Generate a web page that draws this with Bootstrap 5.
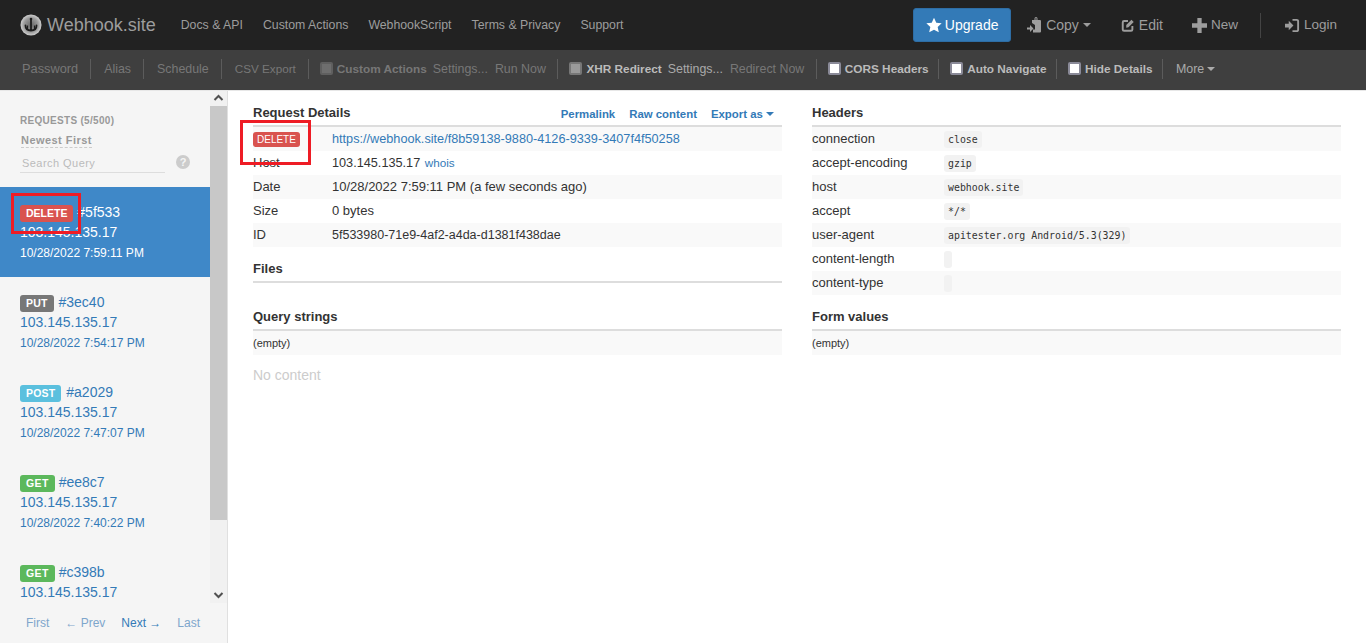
<!DOCTYPE html>
<html lang="en"><head><meta charset="utf-8"><title>Webhook.site</title>
<link href="https://cdn.jsdelivr.net/npm/bootstrap@5.3.0/dist/css/bootstrap.min.css" rel="stylesheet">
<style>
html,body{height:643px;overflow:hidden}
body{font-family:"Liberation Sans",Arial,sans-serif;font-size:14px;color:#333;line-height:20px;background:#fff;position:relative}
a{text-decoration:none;color:#337ab7}
.topbar{height:50px;background:#222;padding-left:20px;padding-right:29px}
.brand{font-size:18px;color:#9d9d9d;margin-right:25px}
.brand svg{margin-right:5px}
.tlink{font-size:12.3px;color:#9d9d9d;margin-right:20px}
.btn-up{background:#337ab7;color:#fff;font-size:14px;height:34px;border-radius:3px;border:1px solid #2e6da4;width:98px;white-space:nowrap}
.btn-up svg{margin-right:3px}
.rlink{font-size:14px;color:#9d9d9d}
.rlink svg{margin-right:4px}
.r-sm{font-size:13.5px}
.m-copy{margin-left:16px}.m-edit{margin-left:30px}.m-new{margin-left:29px}
.vsep{width:1px;height:25px;background:#444;margin:0 24px 0 22px}
.caret-d{display:inline-block;width:0;height:0;border-top:4px solid currentColor;border-left:4px solid transparent;border-right:4px solid transparent;vertical-align:2px}
.caret-copy{margin-left:4px}
.tools{height:40px;background:#3f3f3f;padding-left:22px;padding-bottom:2px;font-size:12.4px;color:#888;position:relative;box-shadow:0 1px 0 #e7e7e7;z-index:1}
.tools .gitem{padding:0 12px 0 13px;height:20px;border-left:1px solid #5c5c5c;line-height:20px;white-space:nowrap}
.tools .gitem:first-child{padding-left:0;border-left:0}
.tools .g-cb{padding:0 9.500px 0 11px}
.tools .g-act{padding:0 11.500px 0 11px}
.t-pass{font-size:12.8px}
.t-csv{font-size:11.7px}
.dim{color:#777}
.lit{color:#bbb;font-weight:700;font-size:11.8px}
.faint{color:#777;font-weight:700;font-size:11.8px}
.gap-s{margin-left:6px}.gap-m{margin-left:7px}
.sett{color:#aaa}
.more{color:#aaa}
.more .caret-d{margin-left:3px}
.cb{width:13px;height:13px;border:2px solid #8a8a98;border-radius:2px;background:#fff;margin-right:4px;display:inline-block;vertical-align:-2px}
.cb.off{background:#9a9a9a;border-color:#777}
.cb.off2{background:#6e6e6e;border-color:#5f5f5f}
.side{width:228px;background:#f5f5f5;border-right:1px solid #e0e0e0;height:553px;flex:none}
.side-scroll{height:513px;overflow:hidden}
.side-main{width:210px}
.sbar{width:17px;background:#f1f1f1;height:513px;position:relative}
.sthumb{height:414px;background:#c8c8c8;margin-top:16px}
.sb-up{top:0;left:0}
.sb-dn{bottom:0;left:0}
.side-head{height:97px;padding:21px 20px 0;color:#999}
.rq{font-size:10px;font-weight:700;letter-spacing:.3px;line-height:19px}
.nf{font-size:11px;font-weight:700;line-height:20px;letter-spacing:.45px;margin-left:1px}
.nf span{border-bottom:1px dashed #ccc;padding-bottom:1px}
.sq{width:146px;border-bottom:1px solid #ddd;font-size:11px;color:#bbb;height:20px;line-height:20px;padding-left:2px;letter-spacing:.45px;margin-top:3px}
.help{width:14px;height:14px;border-radius:50%;background:#ccc;color:#f5f5f5;font-size:11px;font-weight:700;line-height:14px;text-align:center;margin-left:11px}
.ritem{height:90px;padding:15px 20px 0;color:#337ab7;font-size:14px;line-height:20px}
.ritem.act{background:#3f88c8;color:#fff}
.ritem .tm{font-size:12px}
.mbadge{display:inline-block;font-size:10.5px;font-weight:700;color:#fff;line-height:11px;padding:3px 6px;border-radius:3px;letter-spacing:.2px;margin-right:1px}
.b-del{background:#d9534f;letter-spacing:0;margin-right:0}.b-put{background:#777}.b-post{background:#5bc0de}.b-get{background:#5cb85c;letter-spacing:.4px;margin-right:0}
.b-det{font-weight:400;font-size:10px;padding:2px 4px;letter-spacing:0}
.pager{height:40px;font-size:12px;padding:0 27px 0 26px;color:#7ea6cc}
.pager .nx{color:#337ab7}
.mainp{padding:13px 25px 0;flex:1;gap:30px;position:relative}
.mcol{width:529px}
.sech{font-size:13px;font-weight:700;color:#333;line-height:20px;height:22px}
.secbar{height:2px;background:#ddd}
.secrow{height:24px;line-height:24px;font-size:13px}
.secrow:nth-child(odd){background:#f9f9f9}
.klbl{width:79px;flex:none}
.hkey{width:132px;flex:none}
.mlinks{font-size:11.4px;font-weight:700;gap:14px;margin-right:8px;margin-top:1px}
.t-url{font-size:12.7px}.t-ip{font-size:12.7px}.t-id{font-size:12.5px}
.whois{font-size:11.7px;margin-left:1px}
.cd{font-family:"DejaVu Sans Mono","Liberation Mono",monospace;font-size:9.9px;background:#f2f2f2;color:#333;padding:0 4px;border-radius:3px;line-height:17px;height:17px;display:inline-block;min-width:8px}
.emp{font-size:11px;height:24px;line-height:24px;background:#f9f9f9}
.noc{color:#ccc;font-size:14px;margin-top:10px}
.mt-files{margin-top:12px}.mt-query{margin-top:24px}.mt-form{margin-top:12px}
.redbox{position:absolute;border:3px solid #ee1c25}
.rb-a{left:11px;top:193px;width:70px;height:41px}
.rb-b{left:240px;top:120px;width:71px;height:45px}
</style></head><body>
<nav class="topbar d-flex align-items-center">
<a class="brand d-flex align-items-center" href="#"><svg width="22" height="22" viewBox="0 0 22 22"><defs><radialGradient id="g" cx=".5" cy=".5" r=".55"><stop offset="0" stop-color="#666"/><stop offset=".6" stop-color="#999"/><stop offset="1" stop-color="#ddd"/></radialGradient></defs><circle cx="11" cy="11" r="10.500" fill="url(#g)"/><path d="M11 5v11.500M5.500 11.500c0 3.500 2.500 5 5.500 5s5.500-1.500 5.500-5" fill="none" stroke="#1c1c1c" stroke-width="1.800" stroke-linecap="round"/><path d="M7.500 15.500v-4M14.500 15.500v-4" stroke="#1c1c1c" stroke-width="1.200"/><circle cx="11" cy="5" r="1.300" fill="#1c1c1c"/></svg>Webhook.site</a>
<a class="tlink" href="#">Docs &amp; API</a><a class="tlink" href="#">Custom Actions</a><a class="tlink" href="#">WebhookScript</a><a class="tlink" href="#">Terms &amp; Privacy</a><a class="tlink" href="#">Support</a>
<div class="ms-auto d-flex align-items-center">
<a class="btn-up d-flex align-items-center justify-content-center" href="#"><svg width="16" height="16" viewBox="0 0 24 24"><path fill="#fff" d="M12 1l3.400 7.600 8.100.9-6 5.500 1.700 8L12 19l-7.200 4 1.700-8-6-5.500 8.100-.9z"/></svg>Upgrade</a>
<a class="rlink d-flex align-items-center m-copy" href="#"><svg width="15" height="16" viewBox="0 0 15 16"><path fill="#9d9d9d" d="M5 3h2.500V1.500a1.500 1.500 0 0 1 3 0V3H13a1 1 0 0 1 1 1v10.500a1 1 0 0 1-1 1H6v-3h2V8L5 6z"/><path fill="#9d9d9d" d="M0 10.500h3V8l3.500 3.500L3 15v-2.500H0z"/><circle cx="9" cy="2" r=".8" fill="#222"/></svg>Copy<span class="caret-d caret-copy"></span></a>
<a class="rlink d-flex align-items-center m-edit" href="#"><svg width="14" height="14" viewBox="0 0 16 16"><path fill="none" stroke="#9d9d9d" stroke-width="2.200" d="M13 9v4a1.500 1.500 0 0 1-1.500 1.500h-8A1.500 1.500 0 0 1 2 13V5a1.500 1.500 0 0 1 1.500-1.500H8"/><path fill="#9d9d9d" d="M6 8l6-6 2.500 2.500-6 6L6 11z"/></svg>Edit</a>
<a class="rlink r-sm d-flex align-items-center m-new" href="#"><svg width="15" height="15" viewBox="0 0 14 14"><path fill="#9d9d9d" d="M5 0h4v5h5v4H9v5H5V9H0V5h5z"/></svg>New</a>
<span class="vsep"></span>
<a class="rlink r-sm d-flex align-items-center" href="#"><svg width="15" height="15" viewBox="0 0 16 16"><path fill="#9d9d9d" d="M0 6h4V3l5 5-5 5v-3H0z"/><path fill="none" stroke="#9d9d9d" stroke-width="2" d="M8 2h4.500A1.500 1.500 0 0 1 14 3.500v9a1.500 1.500 0 0 1-1.500 1.500H8"/></svg>Login</a>
</div>
</nav>
<div class="tools d-flex align-items-center">
<div class="gitem dim t-pass">Password</div><div class="gitem dim">Alias</div><div class="gitem dim">Schedule</div><div class="gitem dim t-csv">CSV Export</div>
<div class="gitem g-act dim"><span class="cb off2"></span><span class="faint">Custom Actions</span><span class="gap-s">Settings...</span><span class="gap-m">Run Now</span></div>
<div class="gitem g-act dim"><span class="cb off"></span><span class="lit">XHR Redirect</span><span class="gap-s sett">Settings...</span><span class="gap-m">Redirect Now</span></div>
<div class="gitem g-cb"><span class="cb"></span><span class="lit">CORS Headers</span></div>
<div class="gitem g-cb"><span class="cb"></span><span class="lit">Auto Navigate</span></div>
<div class="gitem g-cb"><span class="cb"></span><span class="lit">Hide Details</span></div>
<div class="gitem more">More<span class="caret-d"></span></div>
</div>
<div class="d-flex">
<aside class="side">
<div class="d-flex side-scroll">
<div class="side-main">
<div class="side-head">
<div class="rq">REQUESTS (5/500)</div>
<div class="nf"><span>Newest First</span></div>
<div class="d-flex align-items-center"><div class="sq">Search Query</div><div class="help">?</div></div>
</div>
<div class="ritem act"><span class="mbadge b-del">DELETE</span> #5f533<br>103.145.135.17<br><span class="tm">10/28/2022 7:59:11 PM</span></div>
<div class="ritem"><span class="mbadge b-put">PUT</span> #3ec40<br>103.145.135.17<br><span class="tm">10/28/2022 7:54:17 PM</span></div>
<div class="ritem"><span class="mbadge b-post">POST</span> #a2029<br>103.145.135.17<br><span class="tm">10/28/2022 7:47:07 PM</span></div>
<div class="ritem"><span class="mbadge b-get">GET</span> #ee8c7<br>103.145.135.17<br><span class="tm">10/28/2022 7:40:22 PM</span></div>
<div class="ritem"><span class="mbadge b-get">GET</span> #c398b<br>103.145.135.17</div>
</div>
<div class="sbar d-flex flex-column">
<svg class="position-absolute sb-up" width="17" height="17" viewBox="0 0 17 17"><path d="M4.500 10l4-4 4 4" fill="none" stroke="#505050" stroke-width="2"/></svg>
<div class="sthumb"></div>
<svg class="position-absolute sb-dn" width="17" height="17" viewBox="0 0 17 17"><path d="M4.500 7l4 4 4-4" fill="none" stroke="#505050" stroke-width="2"/></svg>
</div>
</div>
<div class="pager d-flex align-items-center justify-content-between"><span>First</span><span>&#8592; Prev</span><span class="nx">Next &#8594;</span><span>Last</span></div>
</aside>
<main class="mainp d-flex">
<div class="mcol">
<div class="d-flex justify-content-between align-items-start sech"><span>Request Details</span><span class="mlinks d-flex"><a href="#">Permalink</a><a href="#">Raw content</a><a href="#">Export as <span class="caret-d"></span></a></span></div>
<div class="secbar"></div>
<div>
<div class="d-flex secrow align-items-center"><div class="klbl"><span class="mbadge b-del b-det">DELETE</span></div><a class="t-url" href="#">https://webhook.site/f8b59138-9880-4126-9339-3407f4f50258</a></div>
<div class="d-flex secrow"><div class="klbl">Host</div><div><span class="t-ip">103.145.135.17</span> <a class="whois" href="#">whois</a></div></div>
<div class="d-flex secrow"><div class="klbl">Date</div><div>10/28/2022 7:59:11 PM (a few seconds ago)</div></div>
<div class="d-flex secrow"><div class="klbl">Size</div><div>0 bytes</div></div>
<div class="d-flex secrow"><div class="klbl">ID</div><div class="t-id">5f533980-71e9-4af2-a4da-d1381f438dae</div></div>
</div>
<div class="sech mt-files">Files</div><div class="secbar"></div>
<div class="sech mt-query">Query strings</div><div class="secbar"></div>
<div class="emp">(empty)</div>
<div class="noc">No content</div>
</div>
<div class="mcol">
<div class="sech">Headers</div><div class="secbar"></div>
<div>
<div class="d-flex secrow align-items-center"><div class="hkey">connection</div><span class="cd">close</span></div>
<div class="d-flex secrow align-items-center"><div class="hkey">accept-encoding</div><span class="cd">gzip</span></div>
<div class="d-flex secrow align-items-center"><div class="hkey">host</div><span class="cd">webhook.site</span></div>
<div class="d-flex secrow align-items-center"><div class="hkey">accept</div><span class="cd">*/*</span></div>
<div class="d-flex secrow align-items-center"><div class="hkey">user-agent</div><span class="cd">apitester.org Android/5.3(329)</span></div>
<div class="d-flex secrow align-items-center"><div class="hkey">content-length</div><span class="cd"></span></div>
<div class="d-flex secrow align-items-center"><div class="hkey">content-type</div><span class="cd"></span></div>
</div>
<div class="sech mt-form">Form values</div><div class="secbar"></div>
<div class="emp">(empty)</div>
</div>
</main>
</div>
<div class="redbox rb-a"></div>
<div class="redbox rb-b"></div>
<script src="https://cdn.jsdelivr.net/npm/bootstrap@5.3.0/dist/js/bootstrap.bundle.min.js"></script>
</body></html>
